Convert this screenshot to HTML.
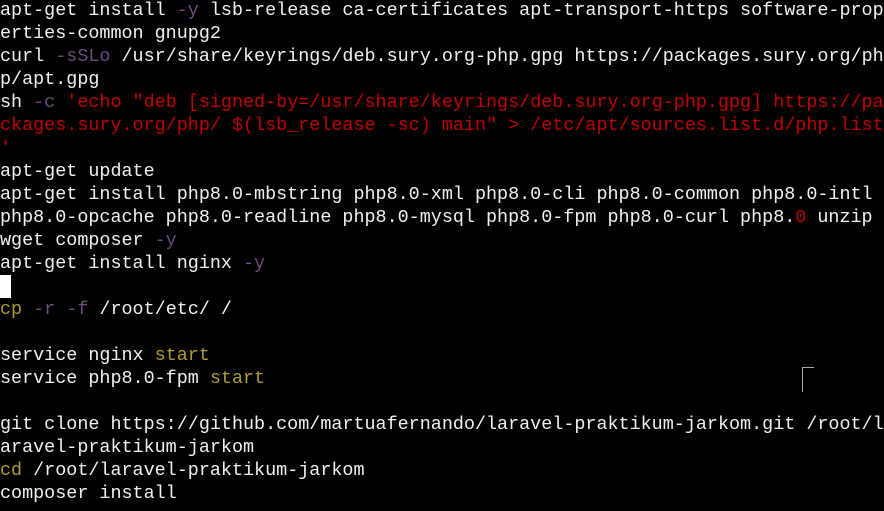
<!DOCTYPE html>
<html><head><meta charset="utf-8"><style>
html,body{margin:0;padding:0;background:#000;width:884px;height:511px;overflow:hidden}
pre{margin:0;position:absolute;left:0;top:-1px;font-family:"Liberation Mono",monospace;font-size:18.42px;line-height:23px;color:#f0f0f0;white-space:pre}
.p{color:#6e4a7e}.r{color:#c00000}.y{color:#b09a32}
.cur{display:inline-block;width:11px;height:23px;background:#fff;vertical-align:top}
.corner{position:absolute;left:802px;top:367px;width:11px;height:24px;border-left:1px solid #aaa;border-top:1px solid #aaa}
</style></head><body>
<pre>apt-get install <span class="p">-y</span> lsb-release ca-certificates apt-transport-https software-prop
erties-common gnupg2
curl <span class="p">-sSLo</span> /usr/share/keyrings/deb.sury.org-php.gpg https://packages.sury.org/ph
p/apt.gpg
sh <span class="p">-c</span> <span class="r">'echo "deb [signed-by=/usr/share/keyrings/deb.sury.org-php.gpg] https://pa
ckages.sury.org/php/ $(lsb_release -sc) main" &gt; /etc/apt/sources.list.d/php.list
'</span>
apt-get update
apt-get install php8.0-mbstring php8.0-xml php8.0-cli php8.0-common php8.0-intl
php8.0-opcache php8.0-readline php8.0-mysql php8.0-fpm php8.0-curl php8.<span class="r">0</span> unzip
wget composer <span class="p">-y</span>
apt-get install nginx <span class="p">-y</span>
<span class="cur"></span>
<span class="y">cp</span> <span class="p">-r</span> <span class="p">-f</span> /root/etc/ /

service nginx <span class="y">start</span>
service php8.0-fpm <span class="y">start</span>

git clone https://github.com/martuafernando/laravel-praktikum-jarkom.git /root/l
aravel-praktikum-jarkom
<span class="y">cd</span> /root/laravel-praktikum-jarkom
composer install</pre>
<div class="corner"></div>
</body></html>
